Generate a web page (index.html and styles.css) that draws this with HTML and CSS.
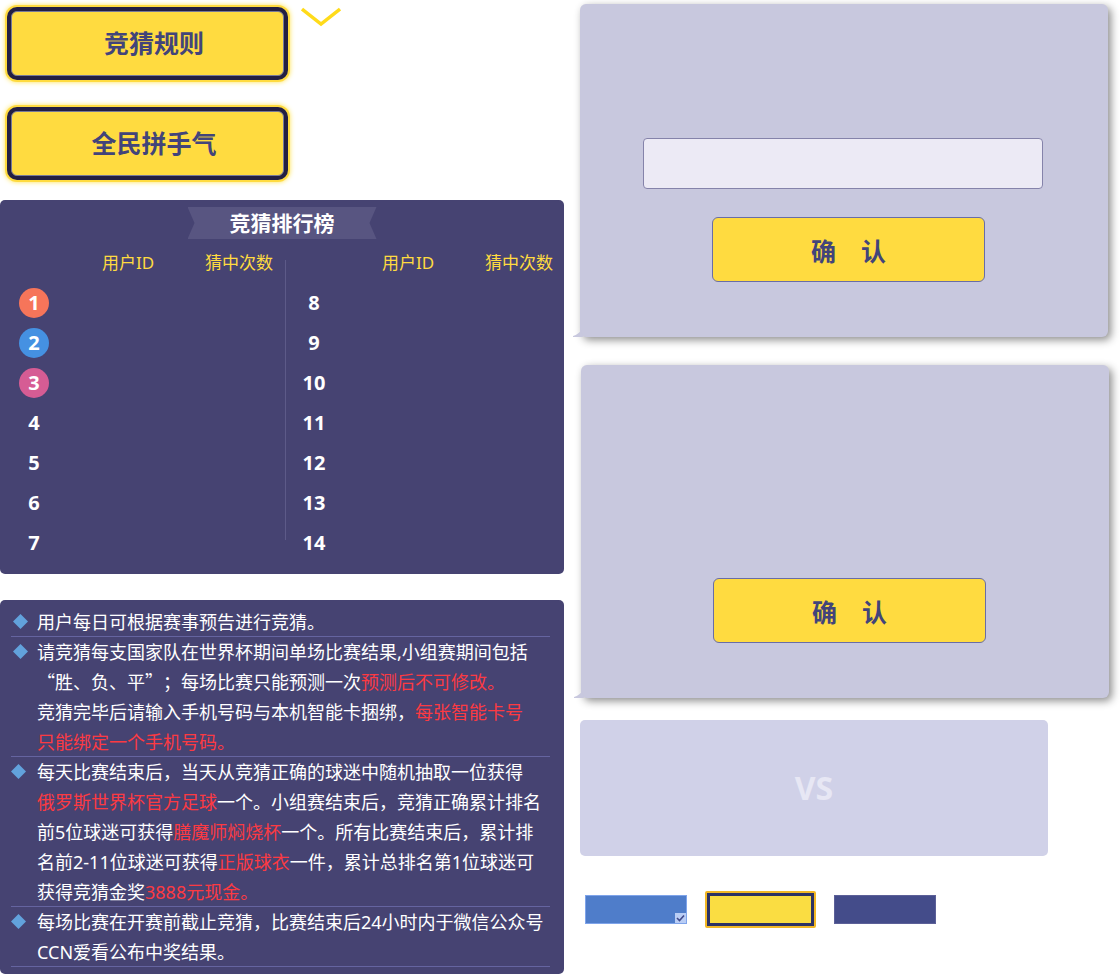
FILE: index.html
```html
<!DOCTYPE html>
<html lang="zh-CN">
<head>
<meta charset="utf-8">
<meta name="viewport" content="width=device-width, initial-scale=1">
<title>竞猜排行榜</title>
<link rel="stylesheet" href="styles.css">
</head>
<body>
<div class="page">
  <main class="column">
    <div class="actions">
      <div class="action-list">
        <button class="glow-button" type="button">竞猜规则</button>
        <button class="glow-button" type="button">全民拼手气</button>
      </div>
      <svg class="chevron" width="40" height="20" viewBox="0 0 40 20" aria-hidden="true"><path d="M1 2L20 17L39 2" fill="none" stroke="#ffdb1a" stroke-width="3.500"/></svg>
    </div>

    <section class="board">
      <h1 class="ribbon">竞猜排行榜</h1>
      <div class="rankings">
        <table class="ranking ranking-first">
          <thead><tr><th class="rank" aria-label="名次"></th><th class="user">用户ID</th><th class="hits">猜中次数</th></tr></thead>
          <tbody>
            <tr><td><span class="medal medal-first">1</span></td><td></td><td></td></tr>
            <tr><td><span class="medal medal-second">2</span></td><td></td><td></td></tr>
            <tr><td><span class="medal medal-third">3</span></td><td></td><td></td></tr>
            <tr><td>4</td><td></td><td></td></tr>
            <tr><td>5</td><td></td><td></td></tr>
            <tr><td>6</td><td></td><td></td></tr>
            <tr><td>7</td><td></td><td></td></tr>
          </tbody>
        </table>
        <div class="divider"></div>
        <table class="ranking ranking-second">
          <thead><tr><th class="rank" aria-label="名次"></th><th class="user">用户ID</th><th class="hits">猜中次数</th></tr></thead>
          <tbody>
            <tr><td>8</td><td></td><td></td></tr>
            <tr><td>9</td><td></td><td></td></tr>
            <tr><td>10</td><td></td><td></td></tr>
            <tr><td>11</td><td></td><td></td></tr>
            <tr><td>12</td><td></td><td></td></tr>
            <tr><td>13</td><td></td><td></td></tr>
            <tr><td>14</td><td></td><td></td></tr>
          </tbody>
        </table>
      </div>
    </section>

    <ul class="rules">
      <li class="rule rule-indent"><svg class="diamond" viewBox="0 0 15 15" aria-hidden="true"><path d="M7.500 0L15 7.500L7.500 15L0 7.500Z"/></svg><p>用户每日可根据赛事预告进行竞猜。</p></li>
      <li class="rule rule-indent"><svg class="diamond" viewBox="0 0 15 15" aria-hidden="true"><path d="M7.500 0L15 7.500L7.500 15L0 7.500Z"/></svg><p>请竞猜每支国家队在世界杯期间单场比赛结果,小组赛期间包括<br><span class="wide">“</span>胜、负、平<span class="wide">”；</span>每场比赛只能预测一次<em>预测后不可修改。</em><br>竞猜完毕后请输入手机号码与本机智能卡捆绑，<em>每张智能卡号<br>只能绑定一个手机号码。</em></p></li>
      <li class="rule"><svg class="diamond" viewBox="0 0 15 15" aria-hidden="true"><path d="M7.500 0L15 7.500L7.500 15L0 7.500Z"/></svg><p>每天比赛结束后，当天从竞猜正确的球迷中随机抽取一位获得<br><em>俄罗斯世界杯官方足球</em>一个。小组赛结束后，竞猜正确累计排名<br>前5位球迷可获得<em>膳魔师焖烧杯</em>一个。所有比赛结束后，累计排<br>名前2-11位球迷可获得<em>正版球衣</em>一件，累计总排名第1位球迷可<br>获得竞猜金奖<em>3888元现金。</em></p></li>
      <li class="rule"><svg class="diamond" viewBox="0 0 15 15" aria-hidden="true"><path d="M7.500 0L15 7.500L7.500 15L0 7.500Z"/></svg><p>每场比赛在开赛前截止竞猜，比赛结束后24小时内于微信公众号<br>CCN爱看公布中奖结果。</p></li>
    </ul>
  </main>

  <aside class="side">
    <form class="dialog">
      <svg class="tail" width="10" height="8" viewBox="0 0 10 8" aria-hidden="true"><path d="M0 7Q6 5 8 1L10 8H0Z" fill="#c8c8de"/></svg>
      <input class="field" type="text" aria-label="手机号码">
      <button class="confirm" type="button">确　认</button>
    </form>
    <form class="dialog dialog-plain">
      <svg class="tail" width="10" height="8" viewBox="0 0 10 8" aria-hidden="true"><path d="M0 7Q6 5 8 1L10 8H0Z" fill="#c8c8de"/></svg>
      <button class="confirm" type="button">确　认</button>
    </form>
    <section class="match">VS</section>
    <div class="options">
      <button class="option option-picked" type="button" aria-label="已选" aria-pressed="true"><svg class="tick" width="11" height="10" viewBox="0 0 11 10" aria-hidden="true"><path d="M0 0H11V10H0Z" fill="#b9cdf5"/><path d="M2 5L4.500 7.500L9 2.500" fill="none" stroke="#414a8c" stroke-width="1.600"/></svg></button>
      <button class="option option-active" type="button" aria-label="当前"></button>
      <button class="option option-dark" type="button" aria-label="普通"></button>
    </div>
  </aside>
</div>
</body>
</html>
```
FILE: styles.css
```css
* {
  box-sizing: border-box;
}

body {
  margin: 0;
  background: #fff;
  color: #fff;
  font-family: "Noto Sans", "Noto Sans CJK SC", sans-serif;
  text-spacing-trim: space-all;
}

button,
input {
  font-family: inherit;
}

.page {
  display: grid;
  grid-template-columns: 564fr 528fr;
  column-gap: 16px;
  padding-right: 12px;
  align-items: start;
}

.actions {
  display: flex;
  align-items: flex-start;
  gap: 13px;
  padding: 7px 7px 20px;
}

.action-list {
  display: grid;
  flex: 0 1 281px;
  gap: 35px;
  padding: 4px;
}

.glow-button {
  height: 65px;
  padding: 0 0 4px 13px;
  border: 1px solid #77799a;
  border-radius: 6px;
  background: #ffdb40;
  box-shadow: 0 0 0 4px #231f42, 0 0 0 6px #ffdb40, 0 0 5px 6px #ffe350;
  color: #42447a;
  font-size: 25px;
  font-weight: 700;
}

.board {
  padding: 7px 0 11px;
  border-radius: 5px;
  background: #464372;
}

.ribbon {
  width: 189px;
  height: 32px;
  margin: 0 auto 4px;
  background: #585581;
  clip-path: polygon(0 0, 100% 0, 182px 50%, 100% 100%, 0 100%, 7px 50%);
  font-size: 21px;
  line-height: 32px;
  text-align: center;
}

.rankings {
  display: grid;
  grid-template-columns: 285fr 1px 278fr;
}

.divider {
  margin: 17px 0 23px;
  background: #5d5a88;
}

.ranking {
  table-layout: fixed;
  border-collapse: collapse;
}

.ranking-first {
  margin: 0 7px 0 12px;
}

.ranking-second {
  margin: 0 6px;
}

.ranking th,
.ranking td {
  height: 40px;
  padding: 0;
  text-align: center;
}

.ranking th {
  color: #ffdb40;
  font-size: 17px;
  font-weight: 400;
  line-height: 24px;
  white-space: nowrap;
}

.ranking td {
  font-size: 20px;
  font-weight: 700;
  line-height: 30px;
}

.rank {
  width: 44px;
}

.hits {
  width: 78px;
}

.medal {
  display: block;
  width: 30px;
  height: 30px;
  margin: 0 auto;
  border-radius: 50%;
}

.medal-first {
  background: #f6755a;
}

.medal-second {
  background: #4591e2;
}

.medal-third {
  background: #d65c94;
}

.rules {
  margin: 26px 0 0;
  padding: 7px 14px 7px 11px;
  border-radius: 5px;
  background: #464372;
  list-style: none;
}

.rule {
  display: grid;
  grid-template-columns: 15px 1fr;
  column-gap: 11px;
  box-shadow: inset 0 -1px #6564a0;
  font-size: 18px;
  line-height: 30px;
}

.rule-indent {
  grid-template-columns: 17px 1fr;
  column-gap: 9px;
}

.rule p {
  margin: 0;
  white-space: nowrap;
}

.rule em {
  color: #fc3a42;
  font-style: normal;
}

.wide {
  font-family: "Noto Sans CJK SC", sans-serif;
  line-height: 1;
}

.diamond {
  width: 15px;
  height: 15px;
  margin-top: 7px;
  justify-self: end;
  fill: #62a2dc;
}

.side {
  display: grid;
  padding-top: 4px;
}

.dialog {
  position: relative;
  display: flex;
  flex-direction: column;
  justify-content: flex-end;
  min-height: 333px;
  padding: 134px 65px 55px 63px;
  border-radius: 6px;
  background: #c8c8de;
  box-shadow: 3px 3px 9px rgba(0, 0, 0, 0.45);
}

.dialog-plain {
  margin: 28px -1px 0 1px;
}

.tail {
  position: absolute;
  bottom: 0;
  left: -7px;
}

.field {
  width: 100%;
  height: 51px;
  margin-bottom: 28px;
  padding: 0 12px;
  border: 1px solid #8583aa;
  border-radius: 4px;
  background: #eceaf5;
  font-size: 18px;
}

.confirm {
  height: 65px;
  margin: 0 58px 0 69px;
  border: 1px solid #696da6;
  border-radius: 6px;
  background: #ffdb40;
  color: #42447a;
  font-size: 25px;
  font-weight: 700;
}

.match {
  height: 136px;
  margin: 22px 60px 0 0;
  border-radius: 5px;
  background: #d0d1e8;
  color: #e7e7f4;
  font-size: 32px;
  font-weight: 700;
  line-height: 136px;
  text-align: center;
}

.options {
  display: flex;
  align-items: center;
  gap: 18px;
  padding: 35px 5px 0;
}

.option {
  display: flex;
  align-items: flex-end;
  justify-content: flex-end;
  width: 102px;
  height: 29px;
  padding: 0;
  border: 1px solid #5c6098;
  background: #444c8a;
}

.option-picked {
  border-color: #7fa4ea;
  background: #4f7dca;
}

.option-active {
  width: 111px;
  height: 37px;
  border: 2px solid #f2b826;
  border-radius: 2px;
  background: #fadd42;
  box-shadow: inset 0 0 0 3px #2d3264;
}
```
